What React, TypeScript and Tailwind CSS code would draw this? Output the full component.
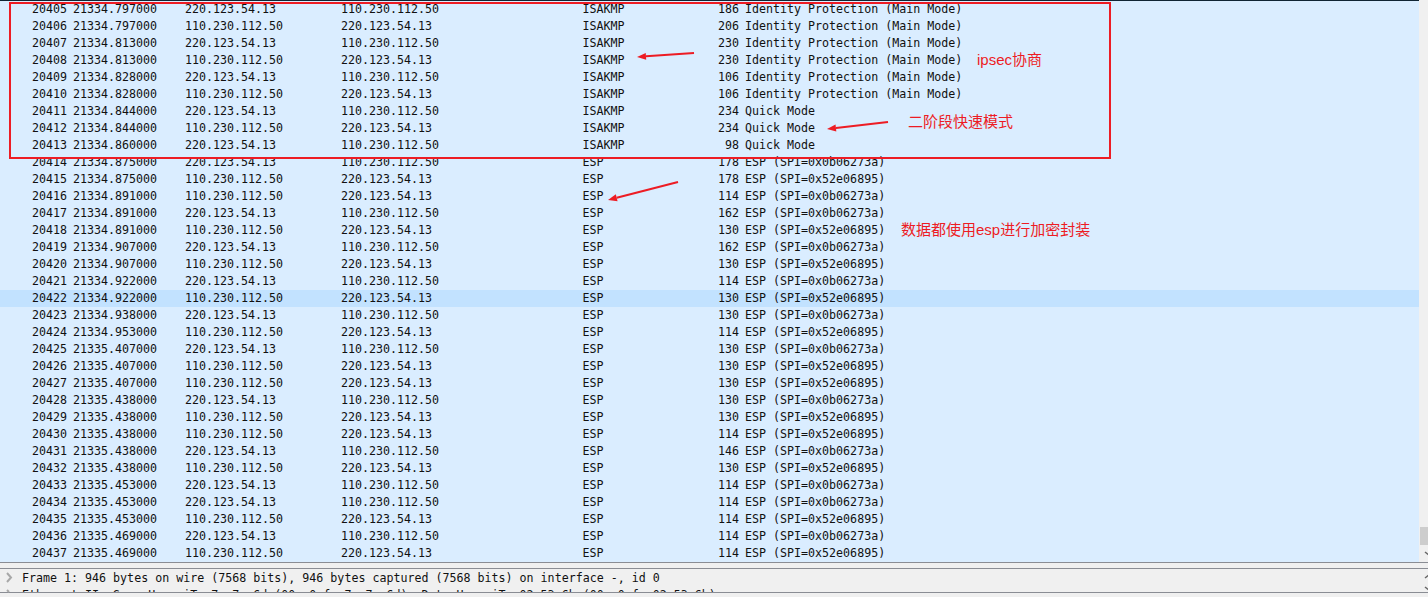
const S = "220.123.54.13";
const D = "110.230.112.50";
type R = [number, string, number, number, string];
const ID = "Identity Protection (Main Mode)";
const A = "ESP (SPI=0x0b06273a)";
const B = "ESP (SPI=0x52e06895)";
const rows: R[] = [
  [20405, "21334.797000", 0, 186, ID],
  [20406, "21334.797000", 1, 206, ID],
  [20407, "21334.813000", 0, 230, ID],
  [20408, "21334.813000", 1, 230, ID],
  [20409, "21334.828000", 0, 106, ID],
  [20410, "21334.828000", 1, 106, ID],
  [20411, "21334.844000", 0, 234, "Quick Mode"],
  [20412, "21334.844000", 1, 234, "Quick Mode"],
  [20413, "21334.860000", 0, 98, "Quick Mode"],
  [20414, "21334.875000", 0, 178, A],
  [20415, "21334.875000", 1, 178, B],
  [20416, "21334.891000", 1, 114, A],
  [20417, "21334.891000", 0, 162, A],
  [20418, "21334.891000", 1, 130, B],
  [20419, "21334.907000", 0, 162, A],
  [20420, "21334.907000", 1, 130, B],
  [20421, "21334.922000", 0, 114, A],
  [20422, "21334.922000", 1, 130, B],
  [20423, "21334.938000", 0, 130, A],
  [20424, "21334.953000", 1, 114, B],
  [20425, "21335.407000", 0, 130, A],
  [20426, "21335.407000", 1, 130, B],
  [20427, "21335.407000", 1, 130, B],
  [20428, "21335.438000", 0, 130, A],
  [20429, "21335.438000", 1, 130, B],
  [20430, "21335.438000", 1, 114, B],
  [20431, "21335.438000", 0, 146, A],
  [20432, "21335.438000", 1, 130, B],
  [20433, "21335.453000", 0, 114, A],
  [20434, "21335.453000", 0, 114, A],
  [20435, "21335.453000", 1, 114, B],
  [20436, "21335.469000", 0, 114, A],
  [20437, "21335.469000", 1, 114, B],
];

function Note({ cls, text }: { cls: string; text: string }) {
  return (
    <span
      className={`absolute whitespace-nowrap text-[15px] leading-[20px] text-[#ed1c24] font-['Liberation_Sans','Noto_Sans_CJK_SC',sans-serif] ${cls}`}
    >
      {text}
    </span>
  );
}

function Arrow({ x1, y1, x2, y2 }: { x1: number; y1: number; x2: number; y2: number }) {
  const a = Math.atan2(y2 - y1, x2 - x1);
  const L = 9;
  const W = 3.5;
  const bx = x2 - L * Math.cos(a);
  const by = y2 - L * Math.sin(a);
  const px = -Math.sin(a) * W;
  const py = Math.cos(a) * W;
  return (
    <g>
      <line x1={x1} y1={y1} x2={bx} y2={by} stroke="#ed1c24" strokeWidth="2" />
      <polygon points={`${x2},${y2} ${bx + px},${by + py} ${bx - px},${by - py}`} fill="#ed1c24" />
    </g>
  );
}

export default function App() {
  return (
    <div className="relative flex h-[597px] w-[1428px] flex-col overflow-hidden bg-[#f0f0f0] font-['DejaVu_Sans_Mono',monospace] text-[11.65px] text-[#111111]">
      <div className="flex h-[563px] shrink-0 border-b border-[#8a8d94]">
        <div className="flex-1 overflow-hidden border-t border-[#0f2433] bg-[#daedff]">
          {rows.map((r) => (
            <div
              key={r[0]}
              className={`flex h-[17px] items-center whitespace-nowrap leading-[17px] ${r[0] === 20422 ? "bg-[#c2e2ff]" : ""}`}
            >
              <span className="w-[67px] shrink-0 text-right">{r[0]}</span>
              <span className="ml-[6px] w-[112px] shrink-0">{r[1]}</span>
              <span className="w-[156px] shrink-0">{r[2] ? D : S}</span>
              <span className="w-[241.5px] shrink-0">{r[2] ? S : D}</span>
              <span className="w-[100.5px] shrink-0">{r[0] < 20414 ? "ISAKMP" : "ESP"}</span>
              <span className="w-[56px] shrink-0 text-right">{r[3]}</span>
              <span className="ml-[6px]">{r[4]}</span>
            </div>
          ))}
        </div>
        <div className="ml-[1px] flex w-[8px] shrink-0 flex-col justify-end bg-[#f0f0f0]">
          <div className="mb-[17px] h-[18px] bg-[#cdcdcd]" />
        </div>
      </div>
      <div className="mt-[5px] h-[25px] shrink-0 overflow-hidden border-y border-[#8a8d94] pl-[22px] pt-[1px] leading-[17px]">
        <div className="h-[17px] whitespace-nowrap">Frame 1: 946 bytes on wire (7568 bits), 946 bytes captured (7568 bits) on interface -, id 0</div>
        <div className="h-[17px] whitespace-nowrap">Ethernet II, Src: HuaweiTe_7c:7e:6d (00:e0:fc:7c:7e:6d), Dst: HuaweiTe_02:53:6b (00:e0:fc:02:53:6b)</div>
      </div>

      <div className="absolute left-[9px] top-[2px] h-[157px] w-[1102px] border-2 border-[#ed1c24]" />
      <Note cls="left-[977px] top-[50px]" text="ipsec协商" />
      <Note cls="left-[908px] top-[112px]" text="二阶段快速模式" />
      <Note cls="left-[901px] top-[220px]" text="数据都使用esp进行加密封装" />
      <svg className="absolute left-0 top-0 pointer-events-none" width="1428" height="597">
        <Arrow x1={694} y1={53} x2={637} y2={57} />
        <Arrow x1={888} y1={122} x2={827} y2={129} />
        <Arrow x1={678} y1={182} x2={608} y2={200} />
        <polyline points="7,573 11,577.5 7,582" fill="none" stroke="#a8a8a8" strokeWidth="2" />
        <polyline points="7,590 9,592" fill="none" stroke="#a8a8a8" strokeWidth="2" />
        <polyline points="1425,552 1430,556" fill="none" stroke="#666666" strokeWidth="1.5" />
        <polyline points="1425,578 1430,574" fill="none" stroke="#666666" strokeWidth="1.5" />
        <polyline points="1425,587 1430,591" fill="none" stroke="#666666" strokeWidth="1.5" />
      </svg>
    </div>
  );
}
